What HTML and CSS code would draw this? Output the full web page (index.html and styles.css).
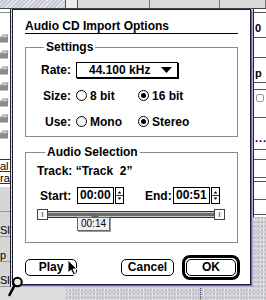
FILE: index.html
```html
<!DOCTYPE html>
<html>
<head>
  <meta charset="utf-8">
  <link rel="stylesheet" href="styles.css">
</head>
<body>
  <div class="desktop">

    <!-- windows behind the dialog -->
    <div class="bg-header">
      <span class="hdr-speckle"></span>
      <span class="hdr-box"></span>
      <span class="hdr-col w72"></span>
      <span class="hdr-col w70"></span>
      <span class="hdr-col"></span>
    </div>

    <div class="bg-left">
      <div class="left-top"></div>
      <div class="folders">
        <svg class="folder" viewBox="0 0 10 9"><path d="M0 3 L3 0 L9 0 L9 9 L0 9 Z" fill="#8a8a8a"/><path d="M3 1 L8 1 L8 3 L1 3 Z" fill="#c8c8c8"/></svg>
        <svg class="folder" viewBox="0 0 10 9"><path d="M0 3 L3 0 L9 0 L9 9 L0 9 Z" fill="#8a8a8a"/><path d="M3 1 L8 1 L8 3 L1 3 Z" fill="#c8c8c8"/></svg>
        <svg class="folder" viewBox="0 0 10 9"><path d="M0 3 L3 0 L9 0 L9 9 L0 9 Z" fill="#8a8a8a"/><path d="M3 1 L8 1 L8 3 L1 3 Z" fill="#c8c8c8"/></svg>
        <svg class="folder" viewBox="0 0 10 9"><path d="M0 3 L3 0 L9 0 L9 9 L0 9 Z" fill="#8a8a8a"/><path d="M3 1 L8 1 L8 3 L1 3 Z" fill="#c8c8c8"/></svg>
        <svg class="folder" viewBox="0 0 10 9"><path d="M0 3 L3 0 L9 0 L9 9 L0 9 Z" fill="#8a8a8a"/><path d="M3 1 L8 1 L8 3 L1 3 Z" fill="#c8c8c8"/></svg>
        <svg class="folder" viewBox="0 0 10 9"><path d="M0 3 L3 0 L9 0 L9 9 L0 9 Z" fill="#8a8a8a"/><path d="M3 1 L8 1 L8 3 L1 3 Z" fill="#c8c8c8"/></svg>
        <svg class="folder" viewBox="0 0 10 9"><path d="M0 3 L3 0 L9 0 L9 9 L0 9 Z" fill="#8a8a8a"/><path d="M3 1 L8 1 L8 3 L1 3 Z" fill="#c8c8c8"/></svg>
      </div>
      <div class="left-rows">
        <div class="lrow">al</div>
        <div class="lrow">ra</div>
      </div>
      <div class="left-gray">
        <div class="grow"></div>
        <div class="grow">Sl</div>
        <div class="grow">p</div>
        <div class="grow">Sl</div>
      </div>
    </div>

    <div class="bg-right">
      <div class="rrow h4"></div>
      <div class="rrow h25">0</div>
      <div class="rrow h20"></div>
      <div class="rrow h25">p</div>
      <div class="rrow h7"></div>
      <div class="rrow h28"><span class="mini-box"></span></div>
      <div class="rrow h32 dots">...</div>
      <div class="rrow h10"></div>
      <div class="rrow h18"></div>
      <div class="rrow h4"></div>
      <div class="rrow h18"></div>
      <div class="rrow h15"></div>
    </div>

    <div class="bg-bottom">
      <span class="bottom-gray"></span>
      <span class="dotted"></span>
    </div>

    <!-- the dialog -->
    <div class="dialog">
      <div class="title">Audio CD Import Options</div>

      <fieldset class="group">
        <legend>Settings</legend>
        <div class="settings-grid">
          <span class="lbl">Rate:</span>
          <div class="popup">
            <span>44.100 kHz</span>
            <svg class="popup-arrow" viewBox="0 0 11 6"><path d="M0 0 H11 L5.5 6 Z" fill="#000"/></svg>
          </div>

          <span class="lbl">Size:</span>
          <span class="opt"><span class="radio"></span>8 bit</span>
          <span class="opt"><span class="radio on"></span>16 bit</span>

          <span class="lbl">Use:</span>
          <span class="opt"><span class="radio"></span>Mono</span>
          <span class="opt"><span class="radio on"></span>Stereo</span>
        </div>
      </fieldset>

      <fieldset class="group audio">
        <legend>Audio Selection</legend>
        <div class="track">Track: “Track&nbsp;&nbsp;2”</div>
        <div class="times">
          <span class="tlbl start">Start:</span>
          <span class="field">00:00</span>
          <span class="stepper">
            <svg viewBox="0 0 9 17"><path d="M2 6 L4.5 3 L7 6 Z M2 11 L7 11 L4.5 14 Z" fill="#000"/><path d="M0 8.5 H9" stroke="#000" stroke-width="1"/></svg>
          </span>
          <span class="tlbl end">End:</span>
          <span class="field">00:51</span>
          <span class="stepper">
            <svg viewBox="0 0 9 17"><path d="M2 6 L4.5 3 L7 6 Z M2 11 L7 11 L4.5 14 Z" fill="#000"/><path d="M0 8.5 H9" stroke="#000" stroke-width="1"/></svg>
          </span>
        </div>
        <div class="slider">
          <span class="thumb"></span>
          <span class="track-bar"></span>
          <span class="thumb"></span>
          <div class="tip">00:14</div>
        </div>
      </fieldset>

      <div class="buttons">
        <button class="btn play">Play</button>
        <button class="btn cancel">Cancel</button>
        <span class="default-ring"><button class="btn ok">OK</button></span>
      </div>
    </div>

    <svg class="cursor" viewBox="0 0 11 17"><path d="M1 1 L1 14 L4 11 L6.5 16 L8.5 15 L6 10 L10 10 Z" fill="#000" stroke="#fff" stroke-width="1"/></svg>
    <svg class="magnifier" viewBox="0 0 15 21"><circle cx="9.5" cy="6" r="4.3" fill="#e8e8e8" stroke="#000" stroke-width="2"/><path d="M6.5 9.5 L1.5 19" stroke="#000" stroke-width="2.6" stroke-linecap="round"/></svg>
  </div>
</body>
</html>
```

FILE: styles.css
```css
* {
  box-sizing: border-box;
}
body {
  margin: 0;
  font-family: "Liberation Sans", Arial, sans-serif;
  font-size: 12px;
  font-weight: bold;
  color: #000;
  overflow: hidden;
}
.desktop {
  position: relative;
  width: 266px;
  height: 300px;
  overflow: hidden;
  background-color: #cfced4;
  background-image:
    radial-gradient(#a4a2ac 0.6px, transparent 0.8px),
    radial-gradient(#ecebf0 0.7px, transparent 0.9px);
  background-size: 4px 4px, 3px 5px;
  background-position: 0 0, 1px 2px;
}

/* background windows */
.bg-header {
  position: absolute;
  left: 0;
  top: 0;
  width: 266px;
  height: 9px;
  display: flex;
  border-bottom: 1px solid #444;
  background: #d9d9d9;
}
.hdr-speckle {
  width: 65px;
  background-color: #c6cad8;
  background-image: repeating-linear-gradient(135deg, #e6e8f0 0 1px, transparent 1px 3px);
}
.hdr-box {
  width: 13px;
  background: #ececec;
  border-left: 1px solid #555;
  border-right: 1px solid #555;
}
.hdr-col {
  border-right: 1px solid #777;
  flex: 1;
}
.hdr-col.w72 { flex: 0 0 72px; }
.hdr-col.w70 { flex: 0 0 70px; }

.bg-left {
  position: absolute;
  left: 0;
  top: 9px;
  width: 11px;
  height: 278px;
  background: #fff;
  border-right: 1px solid #222;
  display: flex;
  flex-direction: column;
  font-size: 11px;
  line-height: 11px;
}
.left-top {
  height: 29px;
  border-top: 1px solid #888;
  margin-top: 3px;
}
.folders {
  display: flex;
  flex-direction: column;
  gap: 7px;
}
.folder {
  width: 9px;
  height: 9px;
  display: block;
}
.left-rows {
  margin-top: 20px;
  border-top: 1px solid #333;
}
.lrow {
  height: 12px;
  padding-top: 1px;
  border-bottom: 1px solid #333;
  white-space: nowrap;
  overflow: hidden;
  font-weight: normal;
}
.left-gray {
  margin-top: 3px;
  flex: 1;
  background: #d6d6d6;
  display: flex;
  flex-direction: column;
}
.grow {
  height: 25px;
  border-bottom: 1px solid #999;
  padding-top: 13px;
  white-space: nowrap;
  overflow: hidden;
  font-weight: normal;
}

.bg-right {
  position: absolute;
  left: 253px;
  top: 9px;
  width: 13px;
  height: 208px;
  background: #fff;
  border-left: 1px solid #222;
  display: flex;
  flex-direction: column;
  font-size: 11px;
}
.rrow {
  border-bottom: 1px solid #555;
  line-height: 12px;
  padding: 2px 0 0 1px;
  overflow: hidden;
}
.h4 { height: 4px; padding: 0; }
.h7 { height: 7px; padding: 0; }
.h10 { height: 10px; padding: 0; }
.h15 { height: 15px; }
.h18 { height: 18px; }
.h20 { height: 20px; }
.h25 { height: 25px; padding-top: 9px; }
.h28 { height: 28px; padding-top: 4px; }
.h32 { height: 32px; padding-top: 14px; }
.mini-box {
  display: block;
  width: 8px;
  height: 8px;
  margin-left: 1px;
  border: 1px solid #999;
  border-radius: 2px;
}
.dots {
  letter-spacing: 1px;
}

.bg-bottom {
  position: absolute;
  left: 0;
  top: 287px;
  width: 266px;
  height: 13px;
}
.bottom-gray {
  position: absolute;
  left: 0;
  top: 0;
  width: 66px;
  height: 13px;
  background: #dcdcdc;
}
.dotted {
  position: absolute;
  left: 200px;
  top: 0;
  width: 1px;
  height: 13px;
  background: repeating-linear-gradient(#d8c050 0 1px, #4a4a80 1px 2px);
}

/* dialog */
.dialog {
  position: absolute;
  left: 12px;
  top: 9px;
  width: 239px;
  height: 276px;
  background: #fff;
  border: 1px solid #1c1c38;
  box-shadow: 1px 1px 0 #6a6a9a, 2px 2px 0 #b0b0d8;
  padding: 10px 12px 0 12px;
}
.title {
  line-height: 13px;
  height: 14px;
  border-bottom: 1px solid #000;
  white-space: nowrap;
}
.group {
  margin: 6px 0 0 0;
  padding: 7px 10px 6px 10px;
  border: 1px solid #8a8a8a;
  min-width: 0;
}
.group legend {
  padding: 0 2px;
  margin-left: 8px;
  line-height: 14px;
}
.settings-grid {
  display: grid;
  grid-template-columns: 35px 57px auto;
  grid-auto-rows: 17px;
  row-gap: 9px;
  column-gap: 5px;
  align-items: center;
}
.lbl {
  text-align: right;
}
.popup {
  grid-column: 2 / span 2;
  width: 102px;
  height: 16px;
  border: 1px solid #000;
  box-shadow: 1px 1px 0 #000;
  display: flex;
  align-items: center;
  justify-content: space-between;
  padding: 0 5px 0 12px;
}
.popup-arrow {
  width: 11px;
  height: 6px;
}
.opt {
  display: flex;
  align-items: center;
  gap: 3px;
  white-space: nowrap;
}
.radio {
  width: 11px;
  height: 11px;
  border: 1px solid #000;
  border-radius: 50%;
  display: flex;
  align-items: center;
  justify-content: center;
}
.radio.on::after {
  content: "";
  width: 5px;
  height: 5px;
  border-radius: 50%;
  background: #000;
}

.group.audio {
  margin-top: 8px;
  padding: 5px 10px 22px 11px;
}
.track {
  line-height: 14px;
  white-space: nowrap;
}
.times {
  margin-top: 9px;
  height: 17px;
  display: flex;
  align-items: center;
}
.tlbl.start {
  margin-left: 3px;
  width: 37px;
}
.tlbl.end {
  margin-left: 21px;
  width: 28px;
}
.field {
  width: 37px;
  height: 17px;
  border: 1px solid #000;
  line-height: 15px;
  padding-left: 2px;
}
.stepper {
  width: 9px;
  height: 17px;
  margin-left: 1px;
  border: 1px solid #000;
  display: flex;
}
.stepper svg {
  width: 7px;
  height: 15px;
}
.slider {
  position: relative;
  margin-top: 5px;
  width: 188px;
  height: 11px;
  display: flex;
  align-items: center;
}
.thumb {
  width: 11px;
  height: 11px;
  border: 1px solid #444;
  background: #eee repeating-linear-gradient(90deg, transparent 0 2px, #777 2px 3px) content-box;
  padding: 2px 2px;
}
.track-bar {
  flex: 1;
  height: 7px;
  border-top: 1px solid #333;
  border-bottom: 1px solid #333;
  background: #6c6c6c;
  box-shadow: inset 0 1px 0 #c4c4c4, inset 0 -1px 0 #c4c4c4;
}
.tip {
  position: absolute;
  left: 40px;
  top: 8px;
  width: 33px;
  height: 14px;
  background: #f0f0f0;
  border: 1px solid #666;
  box-shadow: 1px 1px 0 #999;
  font-size: 10px;
  font-weight: normal;
  line-height: 12px;
  text-align: center;
}
.tip::before {
  content: "";
  position: absolute;
  left: 13px;
  top: -5px;
  border: 4px solid transparent;
  border-bottom: 4px solid #666;
  border-top: 0;
}

.buttons {
  margin-top: 12px;
  display: flex;
  align-items: center;
  margin-right: -2px;
}
.btn {
  font-family: "Liberation Sans", Arial, sans-serif;
  font-size: 12px;
  font-weight: bold;
  color: #000;
  background: #fff;
  border: 1px solid #000;
  border-radius: 5px;
  height: 17px;
  padding: 0;
  line-height: 15px;
}
.play {
  width: 52px;
}
.cancel {
  width: 53px;
  margin-left: auto;
  margin-right: 8px;
}
.default-ring {
  border: 3px solid #000;
  border-radius: 8px;
  padding: 1px;
  display: flex;
}
.ok {
  width: 50px;
}

.cursor {
  position: absolute;
  left: 67px;
  top: 259px;
  width: 11px;
  height: 17px;
}
.magnifier {
  position: absolute;
  left: 8px;
  top: 276px;
  width: 15px;
  height: 21px;
}
```
